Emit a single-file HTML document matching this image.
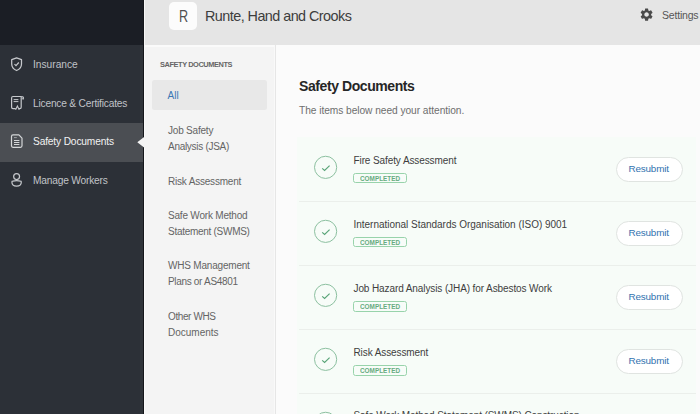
<!DOCTYPE html>
<html><head><meta charset="utf-8"><style>
html,body{margin:0;padding:0;width:700px;height:414px;overflow:hidden;background:#fbfbfb;font-family:"Liberation Sans",sans-serif;}
</style></head><body>
<div style="position:absolute;left:0px;top:0px;width:144px;height:414px;background:#2c3037"></div><div style="position:absolute;left:0px;top:0px;width:144px;height:45px;background:#1b1e25"></div><div style="position:absolute;left:0px;top:123px;width:143px;height:38.5px;background:#4b4e53"></div><div style="position:absolute;left:140px;top:45px;width:3px;height:369px;background:#30343a"></div><div style="position:absolute;left:0px;top:123px;width:143px;height:38.5px;background:#4b4e53"></div><div style="position:absolute;left:143px;top:0px;width:1px;height:414px;background:#15171b"></div><div style="position:absolute;left:33px;top:59.00px;font-size:10.2px;line-height:11.73px;font-weight:400;color:#c0c3c8;letter-spacing:0px;white-space:nowrap;">Insurance</div><div style="position:absolute;left:33px;top:98.00px;font-size:10.2px;line-height:11.73px;font-weight:400;color:#c0c3c8;letter-spacing:-0.2px;white-space:nowrap;">Licence &amp; Certificates</div><div style="position:absolute;left:33px;top:135.90px;font-size:10.2px;line-height:11.73px;font-weight:400;color:#f2f2f2;letter-spacing:-0.15px;white-space:nowrap;">Safety Documents</div><div style="position:absolute;left:33px;top:174.60px;font-size:10.2px;line-height:11.73px;font-weight:400;color:#c0c3c8;letter-spacing:-0.2px;white-space:nowrap;">Manage Workers</div><svg style="position:absolute;left:0;top:0" width="144" height="200" viewBox="0 0 144 200">
<path d="M16.6 57.9 L21.5 59.7 V64 C21.5 67.2 19.4 69.4 16.6 70.5 C13.8 69.4 11.7 67.2 11.7 64 V59.7 Z" fill="none" stroke="#c6c8cc" stroke-width="1.25" stroke-linejoin="round"/>
<path d="M14.5 64.1 L16 65.6 L18.8 62.5" fill="none" stroke="#c6c8cc" stroke-width="1.2"/>
<path d="M15.8 108.6 H13 Q11.6 108.6 11.6 107.2 V97.9 Q11.6 96.5 13 96.5 H21.6 M21.2 96.6 V107.2 Q21.2 108.6 19.8 108.6 H19" fill="none" stroke="#c6c8cc" stroke-width="1.2"/>
<path d="M21.4 96.5 Q23.6 96.6 23.5 98.4" fill="none" stroke="#c6c8cc" stroke-width="1.1"/><circle cx="23.1" cy="98.7" r="0.9" fill="#c6c8cc"/>
<path d="M13.6 99.6 H18.4 M13.6 101.6 H18.4" stroke="#c6c8cc" stroke-width="1"/>
<path d="M15.6 109.7 L17.4 106.1 L19.2 109.7" fill="none" stroke="#c6c8cc" stroke-width="1.1"/>
<path d="M13 134.9 H18.9 L22 138.2 V145.8 Q22 147.3 20.5 147.3 H13 Q11.5 147.3 11.5 145.8 V136.4 Q11.5 134.9 13 134.9 Z" fill="none" stroke="#d4d6d8" stroke-width="1.2" stroke-linejoin="round"/>
<path d="M14 140.5 H19.4 M14 142.5 H19.4 M14 144.5 H19.4" stroke="#d4d6d8" stroke-width="1"/>
<path d="M14 137.6 H16.8" stroke="#d4d6d8" stroke-width="0.6"/>
<circle cx="16.6" cy="176.6" r="2.95" fill="none" stroke="#c6c8cc" stroke-width="1.2"/>
<path d="M11.9 182 Q11.9 181.2 12.7 181.2 Q16.6 180.2 20.5 181.2 Q21.3 181.2 21.3 182 C21.3 184.6 19.2 186.2 16.6 186.2 C14 186.2 11.9 184.6 11.9 182 Z" fill="none" stroke="#c6c8cc" stroke-width="1.2" stroke-linejoin="round"/>
</svg><div style="position:absolute;left:144px;top:0px;width:556px;height:45px;background:#e5e5e5"></div><div style="position:absolute;left:144px;top:0px;width:1px;height:45px;background:#f7f7f7"></div><div style="position:absolute;left:169px;top:2px;width:28px;height:28px;background:#fcfcfc;border-radius:5px"></div><div style="position:absolute;left:178.5px;top:7.84px;font-size:15.8px;line-height:18.17px;font-weight:400;color:#505050;letter-spacing:0px;white-space:nowrap;transform:scaleX(0.8);transform-origin:0 0;">R</div><div style="position:absolute;left:205px;top:7.93px;font-size:14.4px;line-height:16.56px;font-weight:400;color:#3d3d3d;letter-spacing:-0.55px;white-space:nowrap;">Runte, Hand and Crooks</div><svg style="position:absolute;left:639.3px;top:7.3px" width="15.2" height="15.2" viewBox="0 0 24 24"><path fill="#4a4a4a" d="M19.14 12.94c.04-.3.06-.61.06-.94 0-.32-.02-.64-.07-.94l2.03-1.58a.49.49 0 0 0 .12-.61l-1.92-3.32a.488.488 0 0 0-.59-.22l-2.39.96c-.5-.38-1.03-.7-1.62-.94l-.36-2.54a.484.484 0 0 0-.48-.41h-3.84c-.24 0-.43.17-.47.41l-.36 2.54c-.59.24-1.13.57-1.62.94l-2.39-.96c-.22-.08-.47 0-.59.22L2.74 8.87c-.12.21-.08.47.12.61l2.03 1.58c-.05.3-.09.63-.09.94s.02.64.07.94l-2.03 1.58a.49.49 0 0 0-.12.61l1.92 3.32c.12.22.37.29.59.22l2.39-.96c.5.38 1.03.7 1.62.94l.36 2.54c.05.24.24.41.48.41h3.84c.24 0 .44-.17.47-.41l.36-2.54c.59-.24 1.13-.56 1.62-.94l2.39.96c.22.08.47 0 .59-.22l1.92-3.32c.12-.22.07-.47-.12-.61l-2.01-1.58zM12 15.6c-1.98 0-3.6-1.62-3.6-3.6s1.62-3.6 3.6-3.6 3.6 1.62 3.6 3.6-1.62 3.6-3.6 3.6z"/></svg><div style="position:absolute;left:662px;top:8.92px;font-size:10.5px;line-height:12.07px;font-weight:400;color:#555;letter-spacing:-0.2px;white-space:nowrap;">Settings</div><div style="position:absolute;left:144px;top:45px;width:131px;height:369px;background:#f4f4f4"></div><div style="position:absolute;left:275px;top:45px;width:1px;height:369px;background:#e6e6e6"></div><div style="position:absolute;left:144px;top:45px;width:1px;height:369px;background:#fafafa"></div><div style="position:absolute;left:144px;top:45px;width:131px;height:1.5px;background:#fafafa"></div><div style="position:absolute;left:273.5px;top:45px;width:1px;height:369px;background:#f9f9f9"></div><svg style="position:absolute;left:136px;top:136px" width="9" height="13" viewBox="0 0 9 13"><path d="M9 0.2 L1.3 6.3 L9 12.3 Z" fill="#f4f4f4"/></svg><div style="position:absolute;left:160px;top:60.58px;font-size:7.4px;line-height:8.51px;font-weight:700;color:#666;letter-spacing:-0.42px;white-space:nowrap;">SAFETY DOCUMENTS</div><div style="position:absolute;left:152px;top:80px;width:115px;height:30px;background:#e8e8e8;border-radius:2.5px"></div><div style="position:absolute;left:167.5px;top:89.78px;font-size:10px;line-height:11.50px;font-weight:400;color:#3a77b5;letter-spacing:0px;white-space:nowrap;">All</div><div style="position:absolute;left:168px;top:125.38px;font-size:10px;line-height:11.50px;font-weight:400;color:#646464;letter-spacing:-0.2px;white-space:nowrap;">Job Safety</div><div style="position:absolute;left:168px;top:140.69px;font-size:10px;line-height:11.50px;font-weight:400;color:#646464;letter-spacing:-0.29px;white-space:nowrap;">Analysis (JSA)</div><div style="position:absolute;left:168px;top:175.69px;font-size:10px;line-height:11.50px;font-weight:400;color:#646464;letter-spacing:-0.2px;white-space:nowrap;">Risk Assessment</div><div style="position:absolute;left:168px;top:210.09px;font-size:10px;line-height:11.50px;font-weight:400;color:#646464;letter-spacing:-0.2px;white-space:nowrap;">Safe Work Method</div><div style="position:absolute;left:168px;top:225.98px;font-size:10px;line-height:11.50px;font-weight:400;color:#646464;letter-spacing:-0.28px;white-space:nowrap;">Statement (SWMS)</div><div style="position:absolute;left:168px;top:260.39px;font-size:10px;line-height:11.50px;font-weight:400;color:#646464;letter-spacing:-0.2px;white-space:nowrap;">WHS Management</div><div style="position:absolute;left:168px;top:276.19px;font-size:10px;line-height:11.50px;font-weight:400;color:#646464;letter-spacing:-0.32px;white-space:nowrap;">Plans or AS4801</div><div style="position:absolute;left:168px;top:310.69px;font-size:10px;line-height:11.50px;font-weight:400;color:#646464;letter-spacing:-0.39px;white-space:nowrap;">Other WHS</div><div style="position:absolute;left:168px;top:326.59px;font-size:10px;line-height:11.50px;font-weight:400;color:#646464;letter-spacing:0.0px;white-space:nowrap;">Documents</div><div style="position:absolute;left:276px;top:45px;width:424px;height:369px;background:#fbfbfb"></div><div style="position:absolute;left:299px;top:77.90px;font-size:14px;line-height:16.10px;font-weight:700;color:#262626;letter-spacing:-0.42px;white-space:nowrap;">Safety Documents</div><div style="position:absolute;left:299px;top:104.60px;font-size:10.2px;line-height:11.73px;font-weight:400;color:#6e6e6e;letter-spacing:-0.05px;white-space:nowrap;">The items below need your attention.</div><div style="position:absolute;left:297px;top:136.6px;width:399px;height:277.4px;background:#f7fcf8"></div><svg style="position:absolute;left:313px;top:154.90px" width="25" height="25" viewBox="0 0 25 25"><circle cx="12.6" cy="12.35" r="11.1" fill="none" stroke="#8cc0a0" stroke-width="1"/><path d="M9.2 13.3 L11.6 15.5 L16.6 10.6" fill="none" stroke="#58a477" stroke-width="1.15"/></svg><div style="position:absolute;left:353.5px;top:154.58px;font-size:10px;line-height:11.50px;font-weight:400;color:#3e3e3e;letter-spacing:-0.1px;white-space:nowrap;">Fire Safety Assessment</div><div style="position:absolute;left:353.2px;top:173.0px;width:53.6px;height:10.4px;border:1.2px solid #98d3ab;border-radius:2.5px;box-sizing:border-box"></div><div style="position:absolute;left:360.2px;top:174.78px;font-size:7.4px;line-height:8.51px;font-weight:700;color:#66ab7f;letter-spacing:0px;white-space:nowrap;transform:scaleX(0.865);transform-origin:0 0;">COMPLETED</div><div style="position:absolute;left:615.7px;top:156.6px;width:67.2px;height:25px;background:#fff;border:1px solid #e0e4e1;border-radius:13px;box-sizing:border-box"></div><div style="position:absolute;left:628.6px;top:162.98px;font-size:9.9px;line-height:11.38px;font-weight:400;color:#3272b0;letter-spacing:-0.2px;white-space:nowrap;">Resubmit</div><svg style="position:absolute;left:313px;top:219.00px" width="25" height="25" viewBox="0 0 25 25"><circle cx="12.6" cy="12.35" r="11.1" fill="none" stroke="#8cc0a0" stroke-width="1"/><path d="M9.2 13.3 L11.6 15.5 L16.6 10.6" fill="none" stroke="#58a477" stroke-width="1.15"/></svg><div style="position:absolute;left:353.5px;top:218.68px;font-size:10px;line-height:11.50px;font-weight:400;color:#3e3e3e;letter-spacing:-0.02px;white-space:nowrap;">International Standards Organisation (ISO) 9001</div><div style="position:absolute;left:353.2px;top:237.1px;width:53.6px;height:10.4px;border:1.2px solid #98d3ab;border-radius:2.5px;box-sizing:border-box"></div><div style="position:absolute;left:360.2px;top:238.88px;font-size:7.4px;line-height:8.51px;font-weight:700;color:#66ab7f;letter-spacing:0px;white-space:nowrap;transform:scaleX(0.865);transform-origin:0 0;">COMPLETED</div><div style="position:absolute;left:615.7px;top:220.7px;width:67.2px;height:25px;background:#fff;border:1px solid #e0e4e1;border-radius:13px;box-sizing:border-box"></div><div style="position:absolute;left:628.6px;top:227.08px;font-size:9.9px;line-height:11.38px;font-weight:400;color:#3272b0;letter-spacing:-0.2px;white-space:nowrap;">Resubmit</div><svg style="position:absolute;left:313px;top:283.10px" width="25" height="25" viewBox="0 0 25 25"><circle cx="12.6" cy="12.35" r="11.1" fill="none" stroke="#8cc0a0" stroke-width="1"/><path d="M9.2 13.3 L11.6 15.5 L16.6 10.6" fill="none" stroke="#58a477" stroke-width="1.15"/></svg><div style="position:absolute;left:353.5px;top:282.78px;font-size:10px;line-height:11.50px;font-weight:400;color:#3e3e3e;letter-spacing:-0.1px;white-space:nowrap;">Job Hazard Analysis (JHA) for Asbestos Work</div><div style="position:absolute;left:353.2px;top:301.19999999999993px;width:53.6px;height:10.4px;border:1.2px solid #98d3ab;border-radius:2.5px;box-sizing:border-box"></div><div style="position:absolute;left:360.2px;top:302.98px;font-size:7.4px;line-height:8.51px;font-weight:700;color:#66ab7f;letter-spacing:0px;white-space:nowrap;transform:scaleX(0.865);transform-origin:0 0;">COMPLETED</div><div style="position:absolute;left:615.7px;top:284.79999999999995px;width:67.2px;height:25px;background:#fff;border:1px solid #e0e4e1;border-radius:13px;box-sizing:border-box"></div><div style="position:absolute;left:628.6px;top:291.18px;font-size:9.9px;line-height:11.38px;font-weight:400;color:#3272b0;letter-spacing:-0.2px;white-space:nowrap;">Resubmit</div><svg style="position:absolute;left:313px;top:347.20px" width="25" height="25" viewBox="0 0 25 25"><circle cx="12.6" cy="12.35" r="11.1" fill="none" stroke="#8cc0a0" stroke-width="1"/><path d="M9.2 13.3 L11.6 15.5 L16.6 10.6" fill="none" stroke="#58a477" stroke-width="1.15"/></svg><div style="position:absolute;left:353.5px;top:346.88px;font-size:10px;line-height:11.50px;font-weight:400;color:#3e3e3e;letter-spacing:-0.1px;white-space:nowrap;">Risk Assessment</div><div style="position:absolute;left:353.2px;top:365.29999999999995px;width:53.6px;height:10.4px;border:1.2px solid #98d3ab;border-radius:2.5px;box-sizing:border-box"></div><div style="position:absolute;left:360.2px;top:367.08px;font-size:7.4px;line-height:8.51px;font-weight:700;color:#66ab7f;letter-spacing:0px;white-space:nowrap;transform:scaleX(0.865);transform-origin:0 0;">COMPLETED</div><div style="position:absolute;left:615.7px;top:348.9px;width:67.2px;height:25px;background:#fff;border:1px solid #e0e4e1;border-radius:13px;box-sizing:border-box"></div><div style="position:absolute;left:628.6px;top:355.28px;font-size:9.9px;line-height:11.38px;font-weight:400;color:#3272b0;letter-spacing:-0.2px;white-space:nowrap;">Resubmit</div><svg style="position:absolute;left:313px;top:410.50px" width="25" height="25" viewBox="0 0 25 25"><circle cx="12.6" cy="12.35" r="11.1" fill="none" stroke="#8cc0a0" stroke-width="1"/><path d="M9.2 13.3 L11.6 15.5 L16.6 10.6" fill="none" stroke="#58a477" stroke-width="1.15"/></svg><div style="position:absolute;left:353.5px;top:410.19px;font-size:10px;line-height:11.50px;font-weight:400;color:#3e3e3e;letter-spacing:-0.1px;white-space:nowrap;">Safe Work Method Statement (SWMS) Construction</div><div style="position:absolute;left:353.2px;top:428.59999999999997px;width:53.6px;height:10.4px;border:1.2px solid #98d3ab;border-radius:2.5px;box-sizing:border-box"></div><div style="position:absolute;left:360.2px;top:430.38px;font-size:7.4px;line-height:8.51px;font-weight:700;color:#66ab7f;letter-spacing:0px;white-space:nowrap;transform:scaleX(0.865);transform-origin:0 0;">COMPLETED</div><div style="position:absolute;left:299px;top:201px;width:397px;height:1px;background:#ebefeb"></div><div style="position:absolute;left:299px;top:265px;width:397px;height:1px;background:#ebefeb"></div><div style="position:absolute;left:299px;top:329px;width:397px;height:1px;background:#ebefeb"></div><div style="position:absolute;left:299px;top:393px;width:397px;height:1px;background:#ebefeb"></div>
</body></html>
